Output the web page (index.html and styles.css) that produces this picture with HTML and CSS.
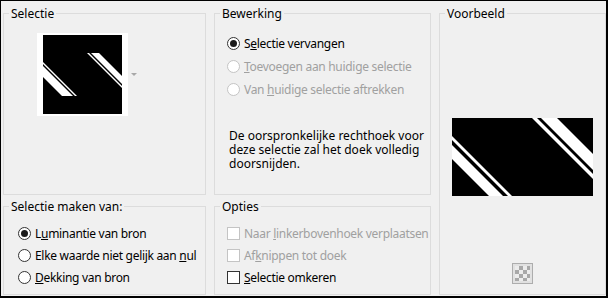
FILE: index.html
```html
<!DOCTYPE html>
<html lang="nl">

<head>
    <meta charset="UTF-8">
    <title>Selectie uit masker</title>
    <link rel="stylesheet" href="styles.css">
</head>

<body>
    <div class="dialog">
        <fieldset class="group sel">
            <legend>Selectie</legend>
            <div class="thumb">
                <svg width="91" height="83" viewBox="0 0 91 83">
                    <rect width="91" height="83" fill="#fff" />
                    <svg x="6" y="2" width="79" height="79" viewBox="0 0 79 79">
                        <rect width="79" height="79" fill="#000" />
                        <polygon points="0,27 0,29 32,61 34,61" fill="#fff" />
                        <polygon points="0,31 0,42 19,61 30,61" fill="#fff" />
                        <polygon points="44,18 46,18 107,79 105,79" fill="#fff" />
                        <polygon points="48,18 56,18 117,79 109,79" fill="#fff" />
                    </svg>
                </svg>
                <span class="caret"></span>
            </div>
        </fieldset>

        <fieldset class="group edit">
            <legend>Bewerking</legend>
            <div class="rows">
                <label class="row"><span class="radio on"></span><span>S<u>e</u>lectie vervangen</span></label>
                <label class="row off"><span class="radio"></span><span><u>T</u>oevoegen aan huidige selectie</span></label>
                <label class="row off"><span class="radio"></span><span>Van <u>h</u>uidige selectie aftrekken</span></label>
            </div>
            <p class="note">De oorspronkelijke rechthoek voor<br>deze selectie zal het doek volledig<br>doorsnijden.</p>
        </fieldset>

        <fieldset class="group preview">
            <legend>Voorbeeld</legend>
            <svg class="shot" width="141" height="78" viewBox="0 0 141 78">
                <rect width="141" height="78" fill="#000" />
                <polygon points="0,18 0,22 56,78 60,78" fill="#fff" />
                <polygon points="0,27 0,41 37,78 51,78" fill="#fff" />
                <polygon points="80,0 85,0 163,78 158,78" fill="#fff" />
                <polygon points="89,0 105,0 183,78 167,78" fill="#fff" />
            </svg>
            <span class="bgbtn"><span class="checker"></span></span>
        </fieldset>

        <fieldset class="group source">
            <legend>Selectie maken van:</legend>
            <div class="rows">
                <label class="row"><span class="radio on"></span><span>L<u>u</u>minantie van bron</span></label>
                <label class="row"><span class="radio"></span><span>Elke waarde niet gelijk aan <u>n</u>ul</span></label>
                <label class="row"><span class="radio"></span><span><u>D</u>ekking van bron</span></label>
            </div>
        </fieldset>

        <fieldset class="group opts">
            <legend>Opties</legend>
            <div class="rows">
                <label class="row off"><span class="check"></span><span>Naar <u>l</u>inkerbovenhoek verplaatsen</span></label>
                <label class="row off"><span class="check"></span><span>Af<u>k</u>nippen tot doek</span></label>
                <label class="row"><span class="check"></span><span><u>S</u>electie omkeren</span></label>
            </div>
        </fieldset>
    </div>
</body>

</html>
```

FILE: styles.css
```css
* {
    padding: 0;
    margin: 0;
    box-sizing: border-box;
}

body {
    font-family: "Noto Sans", "Liberation Sans", sans-serif;
    font-size: 12px;
    color: #000;
}

.dialog {
    display: grid;
    grid-template-columns: 203px 217px 167px;
    grid-template-rows: 190px 97px;
    column-gap: 8px;
    row-gap: 3px;
    width: 608px;
    height: 298px;
    padding: 4px 0 0 2px;
    background: #f0f0f0;
    border-style: solid;
    border-color: #000;
    border-width: 1px 2px 2px 1px;
}

.group {
    border: 1px solid #dcdcdc;
    min-width: 0;
}

.group legend {
    margin-left: 5px;
    padding: 0 2px;
    line-height: 17px;
}

.preview {
    grid-column: 3;
    grid-row: 1 / span 2;
    display: flex;
    flex-direction: column;
    align-items: center;
}

.thumb {
    display: flex;
    align-items: center;
    gap: 3px;
    margin: 11px 0 0 33px;
}

.thumb svg {
    display: block;
}

.caret {
    width: 0;
    height: 0;
    border-left: 3px solid transparent;
    border-right: 3px solid transparent;
    border-top: 3px solid #a8a8a8;
}

.rows {
    padding: 10px 0 0 12px;
}

.source .rows {
    padding: 7px 0 0 14px;
}

.opts .rows {
    padding-top: 7px;
}

.row {
    display: flex;
    align-items: center;
    gap: 4px;
    height: 22px;
    white-space: nowrap;
    letter-spacing: -0.3px;
}

.edit .row {
    height: 23px;
}

.row.off {
    color: #a0a0a0;
}

.radio {
    position: relative;
    width: 13px;
    height: 13px;
    border: 1px solid #333;
    border-radius: 50%;
    background: #fff;
    flex: none;
}

.radio.on::after {
    content: "";
    position: absolute;
    left: 2px;
    top: 2px;
    width: 7px;
    height: 7px;
    border-radius: 50%;
    background: #1a1a1a;
}

.off .radio,
.off .check {
    border-color: #c4c4c4;
}

.check {
    width: 13px;
    height: 13px;
    border: 1px solid #333;
    background: #fff;
    flex: none;
}

.note {
    margin: 28px 0 0 14px;
    line-height: 14px;
}

.shot {
    display: block;
    margin-top: 96px;
}

.bgbtn {
    display: block;
    width: 21px;
    height: 21px;
    margin-top: 67px;
    padding: 2px;
    border: 1px solid #adadad;
    background: #e1e1e1;
}

.checker {
    display: block;
    width: 15px;
    height: 15px;
    background: repeating-conic-gradient(#a8a8a8 0 25%, #ececec 0 50%) 0 0 / 8px 8px;
}
```
